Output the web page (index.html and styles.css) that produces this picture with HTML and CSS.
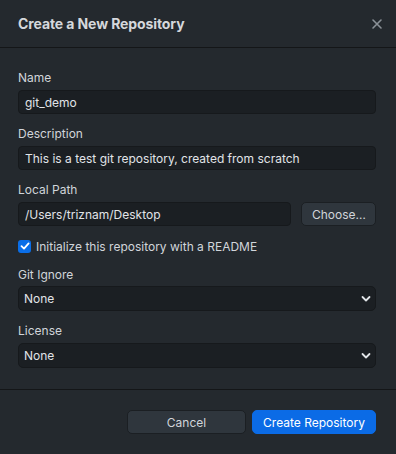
FILE: index.html
```html
<!DOCTYPE html>
<html lang="en">
<head>
    <meta charset="UTF-8">
    <title>Create a New Repository</title>
    <link rel="stylesheet" href="styles.css">
</head>
<body>
    <div class="dialog">
        <div class="dialog-header">
            <h1>Create a New Repository</h1>
            <button class="close-button" aria-label="Close">
                <svg width="12" height="12" viewBox="0 0 12 12">
                    <path d="M2 2L10 10M10 2L2 10" stroke="#8b9197" stroke-width="1.6" stroke-linecap="round"/>
                </svg>
            </button>
        </div>

        <form class="dialog-body">
            <div class="field">
                <label for="name">Name</label>
                <input type="text" id="name" class="text-input" value="git_demo">
            </div>

            <div class="field">
                <label for="description">Description</label>
                <input type="text" id="description" class="text-input" value="This is a test git repository, created from scratch">
            </div>

            <div class="field">
                <label for="path">Local Path</label>
                <div class="path-row">
                    <input type="text" id="path" class="text-input" value="/Users/triznam/Desktop">
                    <button type="button" class="button">Choose…</button>
                </div>
            </div>

            <label class="checkbox-row">
                <span class="checkbox">
                    <svg width="10" height="10" viewBox="0 0 10 10">
                        <path d="M1.5 5.2L4 7.6L8.6 2.4" fill="none" stroke="#fff" stroke-width="1.8" stroke-linecap="round" stroke-linejoin="round"/>
                    </svg>
                </span>
                Initialize this repository with a README
            </label>

            <div class="field select-field">
                <label>Git Ignore</label>
                <div class="select">
                    <span>None</span>
                    <svg width="10" height="10" viewBox="0 0 10 10">
                        <path d="M1.5 3L5 6.5L8.5 3" fill="none" stroke="#e1e4e8" stroke-width="1.8" stroke-linecap="round" stroke-linejoin="round"/>
                    </svg>
                </div>
            </div>

            <div class="field select-field license-field">
                <label>License</label>
                <div class="select">
                    <span>None</span>
                    <svg width="10" height="10" viewBox="0 0 10 10">
                        <path d="M1.5 3L5 6.5L8.5 3" fill="none" stroke="#e1e4e8" stroke-width="1.8" stroke-linecap="round" stroke-linejoin="round"/>
                    </svg>
                </div>
            </div>
        </form>

        <div class="dialog-footer">
            <button type="button" class="button cancel-button">Cancel</button>
            <button type="button" class="button primary-button">Create Repository</button>
        </div>
    </div>
</body>
</html>
```

FILE: styles.css
```css
body {
    margin: 0;
    padding: 0;
    background-color: #24292e;
    font-family: Inter, 'Noto Sans', sans-serif;
    color: #d1d5da;
}
.dialog {
    width: 396px;
    height: 454px;
    display: flex;
    flex-direction: column;
}
.dialog-header {
    height: 47px;
    display: flex;
    align-items: center;
    justify-content: space-between;
    padding: 0 12px 0 18px;
    border-bottom: 1px solid #141618;
}
.dialog-header h1 {
    margin: 0;
    font-size: 14px;
    font-weight: 700;
    color: #d5d8dc;
    letter-spacing: -0.1px;
}
.close-button {
    background: none;
    border: none;
    padding: 0;
    width: 14px;
    height: 14px;
    display: flex;
    align-items: center;
    justify-content: center;
}
.dialog-body {
    margin: 0;
    padding: 23px 20px 21px 18px;
    display: flex;
    flex-direction: column;
    gap: 13px;
    border-bottom: 1px solid #141618;
}
.field {
    display: flex;
    flex-direction: column;
    gap: 5px;
}
.select-field {
    gap: 4px;
}
.license-field {
    gap: 5px;
}
.field label {
    font-size: 12px;
    line-height: 14px;
    color: #d1d5da;
}
.text-input {
    box-sizing: border-box;
    height: 24px;
    width: 100%;
    margin: 0;
    padding: 0 6px;
    background-color: #1b1f23;
    border: 1px solid #16191c;
    border-radius: 4px;
    font-family: inherit;
    font-size: 12px;
    color: #e1e4e8;
    outline: none;
}
.path-row {
    display: flex;
    gap: 10px;
}
.path-row .text-input {
    flex: 1;
}
.button {
    box-sizing: border-box;
    height: 24px;
    padding: 0 10px;
    background-color: #2f363d;
    border: 1px solid #1b1f23;
    border-radius: 5px;
    font-family: inherit;
    font-size: 12px;
    color: #d1d5da;
}
.path-row .button {
    width: 75px;
    flex-shrink: 0;
}
.checkbox-row {
    height: 14px;
    display: flex;
    align-items: center;
    gap: 5px;
    font-size: 12px;
    color: #d1d5da;
    margin-bottom: 2px;
}
.checkbox {
    width: 13px;
    height: 13px;
    border-radius: 3px;
    background-color: #0a6ee8;
    display: flex;
    align-items: center;
    justify-content: center;
}
.select {
    box-sizing: border-box;
    height: 25px;
    display: flex;
    align-items: center;
    justify-content: space-between;
    padding: 0 4px 0 5px;
    background-color: #1b1f23;
    border: 1px solid #16191c;
    border-radius: 5px;
    font-size: 12px;
    color: #e1e4e8;
}
.dialog-footer {
    flex: 1;
    display: flex;
    justify-content: flex-end;
    align-items: flex-start;
    gap: 6px;
    padding: 20px 20px 0 0;
}
.cancel-button {
    width: 119px;
}
.primary-button {
    width: 124px;
    background-color: #0b6be6;
    border-color: #0b6be6;
    color: #ffffff;
}
```
